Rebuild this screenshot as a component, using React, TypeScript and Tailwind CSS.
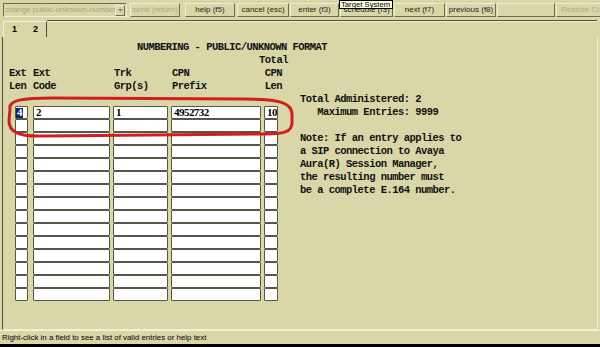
import React from 'react';

const SANS = { fontFamily: '"Liberation Sans", Arial, sans-serif' };
const MONO = { fontFamily: '"Liberation Mono", "DejaVu Sans Mono", monospace' };
const SERIF = { fontFamily: '"Liberation Serif", "Times New Roman", serif' };

interface ButtonProps {
  label: string;
  w: number;
  ml: number;
  disabled?: boolean;
  left?: boolean;
}

function ToolButton({ label, w, ml, disabled, left }: ButtonProps) {
  return (
    <div
      className={`h-[14px] shrink-0 flex items-center border-t border-l border-t-[#f2f0d2] border-l-[#f2f0d2] border-r border-b border-r-[#6d6c58] border-b-[#6d6c58] text-[8px] leading-none whitespace-nowrap overflow-hidden ${
        left ? 'justify-start pl-[4px]' : 'justify-center'
      } ${disabled ? 'text-[#a9a894]' : 'text-[#1a1a1a]'}`}
      style={{ width: w, marginLeft: ml }}
    >
      {label}
    </div>
  );
}

const headerCols = [
  { w: 24, ml: 6 },
  { w: 81, ml: 0 },
  { w: 58, ml: 0 },
  { w: 86, ml: 0 },
  { w: 31, ml: 0, center: true },
];

const headerLines: string[][] = [
  ['', '', '', '', 'Total'],
  ['Ext', 'Ext', 'Trk', 'CPN', 'CPN'],
  ['Len', 'Code', 'Grp(s)', 'Prefix', 'Len'],
];

const fieldCols = [
  { w: 13, ml: 12 },
  { w: 77, ml: 5 },
  { w: 55, ml: 3 },
  { w: 90, ml: 3 },
  { w: 14, ml: 3 },
];

const firstRow = ['4', '2', '1', '4952732', '10'];

function FieldRow({ values }: { values?: string[] }) {
  return (
    <div className="flex h-[13px]">
      {fieldCols.map((c, i) => (
        <div
          key={i}
          className="h-[13px] bg-white border border-[#56554a] rounded-[1px] flex items-center text-[11px] leading-none text-black overflow-hidden"
          style={{ width: c.w, marginLeft: c.ml, ...SERIF }}
        >
          {values && i === 0 && (
            <span className="bg-[#0b2470] text-white px-[1px] h-[10px] flex items-center">{values[i]}</span>
          )}
          {values && i > 0 && <span className="ml-[2px]">{values[i]}</span>}
        </div>
      ))}
    </div>
  );
}

export default function App() {
  const rows = Array.from({ length: 15 }, (_, i) => i);
  return (
    <div className="w-[600px] h-[347px] bg-[#d9d7a8] flex flex-col relative overflow-hidden" style={SANS}>
      {/* Toolbar */}
      <div className="h-[19px] pt-[3px] flex items-start overflow-hidden">
        <div className="ml-[3px] w-[124px] h-[14px] shrink-0 flex items-center border border-t-[#6d6c58] border-l-[#6d6c58] border-r-[#f2f0d2] border-b-[#f2f0d2]">
          <span className="flex-1 text-[7.8px] leading-none text-[#a3a28d] whitespace-nowrap overflow-hidden pl-[1px]">
            change public-unknown-number
          </span>
          <div className="w-[10px] h-[11px] mr-[1px] flex items-center justify-center border border-t-[#f2f0d2] border-l-[#f2f0d2] border-r-[#6d6c58] border-b-[#6d6c58] bg-[#d9d7a8]">
            <svg width="5" height="3" viewBox="0 0 5 3">
              <path d="M0 0 L5 0 L2.5 3 Z" fill="#8f8e7a" />
            </svg>
          </div>
        </div>
        <ToolButton label="send (return)" w={50} ml={3} disabled />
        <ToolButton label="help (f5)" w={50} ml={5} />
        <ToolButton label="cancel (esc)" w={52} ml={2} />
        <ToolButton label="enter (f3)" w={49} ml={1} />
        <ToolButton label="schedule (f3)" w={53} ml={1} />
        <ToolButton label="next (f7)" w={51} ml={1} />
        <ToolButton label="previous (f8)" w={50} ml={1} />
        <ToolButton label="" w={58} ml={1} />
        <ToolButton label="Restore Columns" w={70} ml={1} disabled left />
      </div>

      {/* Tooltip */}
      <div className="absolute left-[339px] top-0 w-[54px] h-[9px] bg-[#ffffe1] border border-black text-[7.7px] leading-[7px] text-black whitespace-nowrap pl-[1px]">
        Target System
      </div>

      {/* Tabs */}
      <div className="h-[18px] flex items-end">
        <div className="ml-[3px] w-[22px] h-[16px] border-l border-t border-[#f2f0d2] flex items-center justify-center text-[9px] font-bold text-black">
          1
        </div>
        <div className="w-[22px] h-[16px] border-t border-r border-t-[#f2f0d2] border-r-[#4a493c] flex items-center justify-center text-[9px] font-bold text-black">
          2
        </div>
        <div className="flex-1 self-start mt-[1px] mr-[3px] h-[2px] border-t border-b border-t-[#4f4e40] border-b-[#f2f0d2]" />
      </div>

      {/* Panel */}
      <div className="relative flex-1 ml-[2px] mr-[2px] border-l border-[#4f4e40] border-r border-r-[#f2f0d2] border-b border-b-[#f2f0d2]" style={MONO}>
        <div className="pt-[4px] text-[10.5px] tracking-[-0.54px] leading-[13px] font-bold text-[#111] whitespace-pre">
          <div className="ml-[134px]">NUMBERING - PUBLIC/UNKNOWN FORMAT</div>
          <div className="flex">
            <div className="w-[297px] shrink-0">
              {headerLines.map((line, li) => (
                <div key={li} className="flex h-[13px]">
                  {headerCols.map((c, i) => (
                    <span
                      key={i}
                      className={c.center ? 'text-center' : ''}
                      style={{ width: c.w, marginLeft: c.ml }}
                    >
                      {line[i]}
                    </span>
                  ))}
                </div>
              ))}
              <div className="mt-[13px]">
                {rows.map((r) => (
                  <FieldRow key={r} values={r === 0 ? firstRow : undefined} />
                ))}
              </div>
            </div>
            <div className="mt-[39px]">
              <div>Total Administered: 2</div>
              <div>   Maximum Entries: 9999</div>
              <div>&nbsp;</div>
              <div>Note: If an entry applies to</div>
              <div>a SIP connection to Avaya</div>
              <div>Aura(R) Session Manager,</div>
              <div>the resulting number must</div>
              <div>be a complete E.164 number.</div>
            </div>
          </div>
        </div>

        {/* Red highlight drawn over the first rows */}
        <svg className="absolute left-0 top-0 pointer-events-none" width="300" height="110" viewBox="0 0 300 110">
          <path
            d="M7 72 C5 63, 20 61, 50 61 L240 62 C270 62, 289 64, 289 77 L289 86 C289 95, 280 97, 262 97 L40 99 C14 100, 6 94, 6 84 Z"
            fill="none"
            stroke="#d11f1f"
            strokeWidth="3"
          />
        </svg>
      </div>

      {/* Status bar */}
      <div className="h-[14px] flex items-center pl-[2px] text-[7.9px] text-black border-t border-[#f2f0d2] whitespace-nowrap">
        Right-click in a field to see a list of valid entries or help text
      </div>
      <div className="h-[3px] bg-black" />
    </div>
  );
}
